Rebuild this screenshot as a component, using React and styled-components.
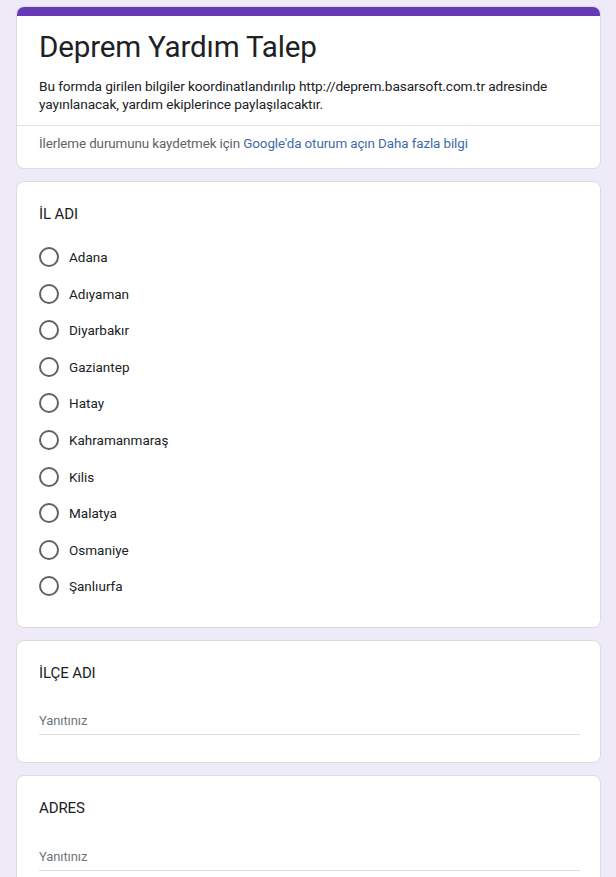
import React from 'react'
import styled, { createGlobalStyle } from 'styled-components'

const GlobalStyle = createGlobalStyle`
  html, body {
    margin: 0;
    padding: 0;
    background: #efeaf7;
    font-family: Roboto, "Liberation Sans", Arial, sans-serif;
    color: #202124;
  }
`

const Page = styled.div`
  display: flex;
  flex-direction: column;
  gap: 12px;
  padding: 6px 15px 20px 16px;
`

const Card = styled.div`
  background: #fff;
  border: 1px solid #dadce0;
  border-radius: 8px;
  overflow: hidden;
  display: flex;
  flex-direction: column;
`

const TopBar = styled.div`
  height: 9px;
  background: #673ab7;
`

const HeadBody = styled.div`
  padding: 11px 22px 12px 22px;
`

const Title = styled.h1`
  margin: 0;
  font-size: 29.6px;
  font-weight: 400;
  line-height: 40px;
  letter-spacing: -0.2px;
`

const Description = styled.p`
  margin: 10px 0 0;
  font-size: 13.7px;
  line-height: 18px;
  letter-spacing: -0.1px;
`

const Divider = styled.div`
  height: 1px;
  background: #e2e2e4;
`

const LoginRow = styled.div`
  padding: 9px 22px 15px;
  font-size: 13.4px;
  line-height: 18px;
  color: #5f6368;
  letter-spacing: -0.1px;
`

const Link = styled.span`
  color: #3f6aa8;
`

const QuestionBody = styled.div`
  padding: ${p => p.$top}px 22px ${p => p.$bottom}px 22px;
  display: flex;
  flex-direction: column;
`

const QuestionTitle = styled.div`
  font-size: 15px;
  line-height: 20px;
  letter-spacing: -0.1px;
`

const Options = styled.div`
  display: flex;
  flex-direction: column;
  margin-top: 15px;
`

const Option = styled.label`
  display: flex;
  align-items: center;
  gap: 10px;
  height: 36.56px;
  font-size: 13.5px;
  color: #202124;
`

const Radio = styled.span`
  width: 16px;
  height: 16px;
  border: 2px solid #5f6368;
  border-radius: 50%;
  flex: none;
`

const AnswerField = styled.div`
  margin-top: ${p => p.$gap}px;
  width: 541px;
  border-bottom: 1px solid #dadce0;
  padding-bottom: 6px;
  font-size: 13px;
  color: #70757a;
  letter-spacing: -0.1px;
`

const cities = [
  'Adana',
  'Adıyaman',
  'Diyarbakır',
  'Gaziantep',
  'Hatay',
  'Kahramanmaraş',
  'Kilis',
  'Malatya',
  'Osmaniye',
  'Şanlıurfa',
]

const TextQuestion = ({ title, gap }) => (
  <Card>
    <QuestionBody $top={22} $bottom={27}>
      <QuestionTitle>{title}</QuestionTitle>
      <AnswerField $gap={gap}>Yanıtınız</AnswerField>
    </QuestionBody>
  </Card>
)

export default function App() {
  return (
    <>
      <GlobalStyle />
      <Page>
        <Card>
          <TopBar />
          <HeadBody>
            <Title>Deprem Yardım Talep</Title>
            <Description>
              Bu formda girilen bilgiler koordinatlandırılıp http://deprem.basarsoft.com.tr adresinde
              yayınlanacak, yardım ekiplerince paylaşılacaktır.
            </Description>
          </HeadBody>
          <Divider />
          <LoginRow>
            İlerleme durumunu kaydetmek için <Link>Google'da oturum açın</Link> <Link>Daha fazla bilgi</Link>
          </LoginRow>
        </Card>

        <Card>
          <QuestionBody $top={22} $bottom={23}>
            <QuestionTitle>İL ADI</QuestionTitle>
            <Options>
              {cities.map(c => (
                <Option key={c}>
                  <Radio />
                  {c}
                </Option>
              ))}
            </Options>
          </QuestionBody>
        </Card>

        <TextQuestion title="İLÇE ADI" gap={30} />
        <TextQuestion title="ADRES" gap={31} />
      </Page>
    </>
  )
}
